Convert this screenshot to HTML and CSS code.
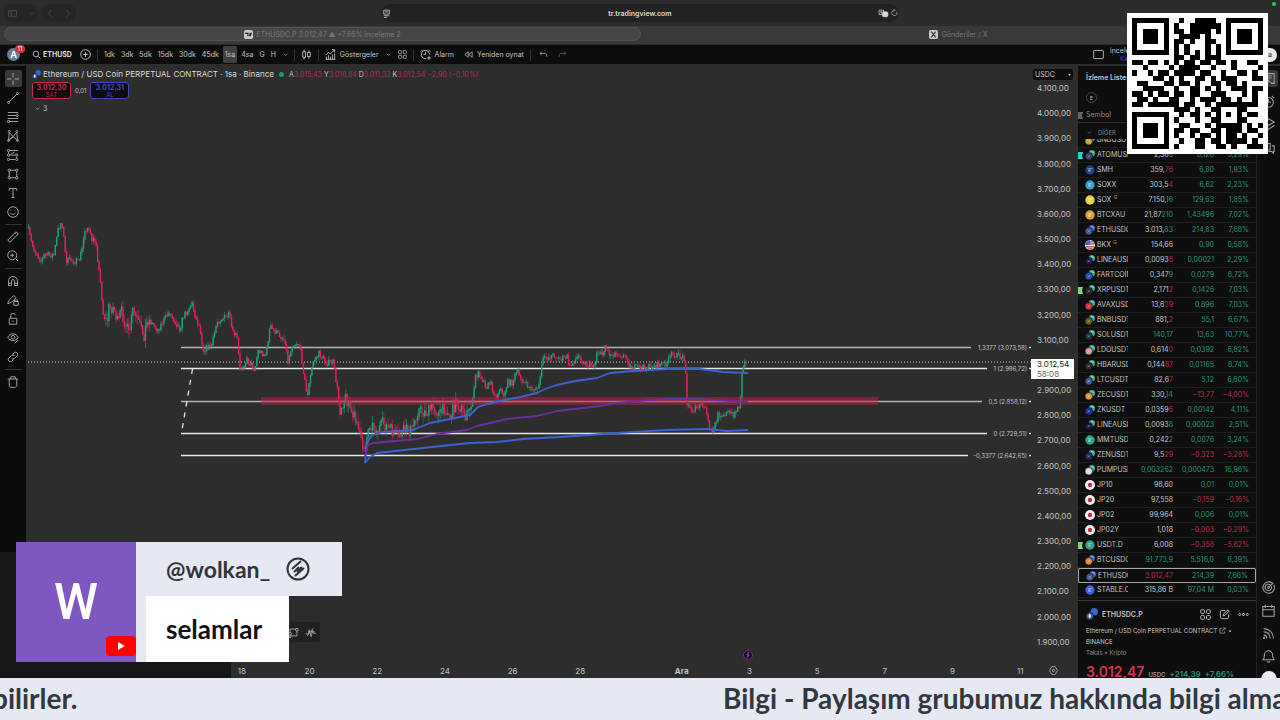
FILE: index.html
```html
<!DOCTYPE html>
<html lang="tr">
<head>
    <meta charset="UTF-8">
    <meta name="viewport" content="width=device-width, initial-scale=1.0">
    <title>ETHUSDC.P 3.012,47 - inceleme 2</title>
    <link rel="stylesheet" href="styles.css">
</head>
<body>
    <svg class="sprite" aria-hidden="true">
        <symbol id="down" viewBox="0 0 16 16"><path d="M4 6l4 4 4-4"/></symbol>
        <symbol id="search" viewBox="0 0 16 16"><circle cx="7" cy="7" r="5"/><path d="M11 11l4 4"/></symbol>
        <symbol id="plus" viewBox="0 0 16 16"><circle cx="8" cy="8" r="7"/><path d="M8 4.5v7M4.500 8h7"/></symbol>
        <symbol id="candles" viewBox="0 0 16 16"><path d="M2.5 4h4v8h-4zM4.5 1v3M4.5 12v3M9.5 5h4v6h-4zM11.5 2v3M11.5 11v3"/></symbol>
        <symbol id="indicator" viewBox="0 0 16 16"><path d="M1 9l4-4 3 2 6-6M10 1h4v4M2 15v-4M5 15V9M8 15v-4M11 15V8M14 15V7M1 15h14"/></symbol>
        <symbol id="grid" viewBox="0 0 16 16"><rect x="1" y="1" width="5.5" height="5.5" rx="1.5"/><rect x="9.5" y="1" width="5.5" height="5.5" rx="1.5"/><rect x="1" y="9.5" width="5.5" height="5.5" rx="1.5"/><rect x="9.5" y="9.5" width="5.5" height="5.5" rx="1.5"/></symbol>
        <symbol id="alarm" viewBox="0 0 16 16"><path d="M9 14H7a6 6 0 1 1 7-6M8 4v4H5M1 4l3-3M12 1l3 3M13 10v6M10 13h6"/></symbol>
        <symbol id="rewind" viewBox="0 0 16 16"><path d="M7.5 3v10L1.5 8zM14.5 3v10l-6-5z"/></symbol>
        <symbol id="undo" viewBox="0 0 16 16"><path d="M5 3L2 6l3 3M2 6h8c3 0 4 2 4 6"/></symbol>
        <symbol id="redo" viewBox="0 0 16 16"><path d="M11 3l3 3-3 3M14 6H6c-3 0-4 2-4 6"/></symbol>
        <symbol id="cross" viewBox="0 0 16 16"><path d="M8 0v6M8 10v6M0 8h6M10 8h6"/></symbol>
        <symbol id="trend" viewBox="0 0 16 16"><path d="M3 13L13 3"/><circle cx="2" cy="14" r="1.3"/><circle cx="14" cy="2" r="1.3"/></symbol>
        <symbol id="fib" viewBox="0 0 16 16"><path d="M1 2h14M1 6h11M1 10h14M3 14h12"/><circle cx="13.5" cy="6" r="1.5"/><circle cx="2" cy="14" r="1.5"/></symbol>
        <symbol id="pattern" viewBox="0 0 16 16"><path d="M2 14L3 3l5 6 5-6 1 11-6-5zM2 14l6-5"/><circle cx="3" cy="2" r="1.3"/><circle cx="13" cy="2" r="1.3"/><circle cx="2" cy="14" r="1.3"/><circle cx="14" cy="14" r="1.3"/></symbol>
        <symbol id="forecast" viewBox="0 0 16 16"><path d="M3 2h12M3 8h8M3 14h8M2 4v2M13 10v2M5 7l5-3"/><circle cx="2" cy="2" r="1.5"/><circle cx="2" cy="8" r="1.5"/><circle cx="2" cy="14" r="1.5"/><circle cx="13" cy="8" r="1.5"/><circle cx="13" cy="14" r="1.5"/></symbol>
        <symbol id="rect" viewBox="0 0 16 16"><path d="M4 3h8M4 13h8M3 4v8M13 4v8"/><circle cx="3" cy="3" r="1.5"/><circle cx="13" cy="3" r="1.5"/><circle cx="3" cy="13" r="1.5"/><circle cx="13" cy="13" r="1.5"/></symbol>
        <symbol id="text" viewBox="0 0 16 16"><path d="M3 5V2h10v3M8 2v12M6 14h4"/></symbol>
        <symbol id="smile" viewBox="0 0 16 16"><circle cx="8" cy="8" r="7"/><path d="M5 9c1 3 5 3 6 0M5.5 5v1M10.5 5v1"/></symbol>
        <symbol id="ruler" viewBox="0 0 16 16"><path d="M1 12L12 1l3 3L4 15zM5 9l1 1M8 6l1 1M11 3l1 1"/></symbol>
        <symbol id="zoom" viewBox="0 0 16 16"><circle cx="7" cy="7" r="6"/><path d="M11.5 11.5L15 15M7 4.5v5M4.5 7h5"/></symbol>
        <symbol id="magnet" viewBox="0 0 16 16"><path d="M2 14V8a6 6 0 0 1 12 0v6h-4V8a2 2 0 0 0-4 0v6zM2 11h4M10 11h4"/></symbol>
        <symbol id="lockpen" viewBox="0 0 16 16"><path d="M1 13l1-4 7-7 3 3-6 6zM9 10h6v5H9zM10 10V8h4v2"/></symbol>
        <symbol id="lock" viewBox="0 0 16 16"><path d="M3 7h10v8H3zM5 7V4a3 3 0 0 1 6-1M8 10v2"/></symbol>
        <symbol id="eye" viewBox="0 0 16 16"><path d="M1 7c3-6 11-6 14 0-3 6-11 6-14 0zM10 15l5-4"/><circle cx="8" cy="7" r="2.5"/></symbol>
        <symbol id="link" viewBox="0 0 16 16"><path d="M7 5l3-3a3 3 0 0 1 4 4l-4 4a3 3 0 0 1-4 0M9 11l-3 3a3 3 0 0 1-4-4l4-4a3 3 0 0 1 4 0"/></symbol>
        <symbol id="trash" viewBox="0 0 16 16"><path d="M1 4h14M5 4V1h6v3M3 4v9c0 1 1 2 2 2h6c1 0 2-1 2-2V4"/></symbol>
        <symbol id="list" viewBox="0 0 16 16"><path d="M1 2h14v12h-3l-2-2H1zM4 5h8M4 7.5h8M4 10h5"/></symbol>
        <symbol id="clock" viewBox="0 0 16 16"><circle cx="8" cy="9" r="6"/><path d="M8 5v4h3M1 4l3-3M12 1l3 3"/></symbol>
        <symbol id="layers" viewBox="0 0 16 16"><path d="M8 1l7 4-7 4-7-4zM1 9l7 5 7-5"/></symbol>
        <symbol id="chat" viewBox="0 0 16 16"><path d="M1 11V3h9v8H5l-2 3v-3zM12 6h3v7h-1v2l-2-2H8"/></symbol>
        <symbol id="target" viewBox="0 0 16 16"><path d="M13 3a7 7 0 1 0 1.5 2M10.5 5a4 4 0 1 0 1 1.5M8 8l6-6"/><circle cx="8" cy="8" r="1"/></symbol>
        <symbol id="calendar" viewBox="0 0 16 16"><path d="M1 3h14v12H1zM1 7h14M4 1v4M12 1v4"/></symbol>
        <symbol id="rss" viewBox="0 0 16 16"><path d="M2 2c7 0 12 5 12 12M2 6c5 0 8 3 8 8M2 10c3 0 4 1 4 4"/><circle cx="2.5" cy="13.5" r=".7"/></symbol>
        <symbol id="bell" viewBox="0 0 16 16"><path d="M1 12c2-2 2-3 2-6a5 5 0 0 1 10 0c0 3 0 4 2 6zM6 14c1 1 3 1 4 0"/></symbol>
        <symbol id="edit" viewBox="0 0 16 16"><path d="M9 2H4C3 2 2 3 2 4v8c0 1 1 2 2 2h8c1 0 2-1 2-2V8M6 10l1-3 6-6 2 2-6 6z"/></symbol>
        <symbol id="more" viewBox="0 0 16 16"><circle cx="2.5" cy="8" r="1.5"/><circle cx="8" cy="8" r="1.5"/><circle cx="13.5" cy="8" r="1.5"/></symbol>
        <symbol id="gear" viewBox="0 0 16 16"><path d="M5 1h6l4 7-4 7H5L1 8z"/><circle cx="8" cy="8" r="2"/></symbol>
        <symbol id="external" viewBox="0 0 16 16"><path d="M6 3H2v11h11v-4M9 2h5v5M14 2L7 9"/></symbol>
        <symbol id="reload" viewBox="0 0 16 16"><path d="M13 6a6 6 0 1 1-5-3M6 0l3 3-3 3"/></symbol>
        <symbol id="branch" viewBox="0 0 16 16"><path d="M3 8V3h9M4 13h9V6"/><circle cx="3" cy="10" r="2"/><circle cx="13" cy="4" r="2"/><circle cx="3" cy="14" r="1.5"/></symbol>
        <symbol id="spark" viewBox="0 0 16 16"><path d="M1 10h4l1-6 3 10 2-9 1 4h4M3 13l9-11M5 7h9"/></symbol>
        <symbol id="eth" viewBox="0 0 16 16"><circle class="coin-quote" cx="11" cy="5" r="5"/><circle class="coin-base" cx="5" cy="11" r="5"/><path class="coin-mark" d="M5 7l2 4-2 3-2-3z"/></symbol>
    </svg>

    <!-- Browser -->
    <header class="browser">
        <div class="address-row">
            <div class="side-buttons">
                <button class="pill" aria-label="Kenar çubuğu"><svg class="icon" viewBox="0 0 16 16"><path d="M1 3h14v10H1zM6 3v10M3 5h1M3 7h1"/></svg><svg class="icon small"><use href="#down"/></svg></button>
                <div class="pill">
                    <button aria-label="Geri"><svg class="icon" viewBox="0 0 16 16"><path d="M10 2L4 8l6 6"/></svg></button>
                    <button aria-label="İleri"><svg class="icon" viewBox="0 0 16 16"><path d="M6 2l6 6-6 6"/></svg></button>
                </div>
            </div>
            <div class="address">
                <svg class="icon" viewBox="0 0 16 16"><path d="M3 2h10v7H3zM3 12h10M3 15h6M5 5h6"/></svg>
                <span>tr.tradingview.com</span>
                <span class="address-tools">
                    <svg class="icon wide" viewBox="0 0 20 16"><path d="M2 2h8v8H2zM4 5h4M6 4v4"/><rect class="solid" x="8" y="5" width="10" height="9" rx="3"/></svg>
                    <svg class="icon small"><use href="#reload"/></svg>
                </span>
            </div>
            <span class="camera"></span>
        </div>
        <nav class="tabs">
            <a class="tab active" href="#"><svg class="favicon" viewBox="0 0 16 16"><rect width="16" height="16" rx="3"/><path d="M2 5h6v6H6V7H2zM10 5h4l-2 6h-3z"/></svg>ETHUSDC.P 3.012,47 ▲ +7.66% inceleme 2</a>
            <a class="tab" href="#"><svg class="favicon" viewBox="0 0 16 16"><rect width="16" height="16" rx="3"/><path class="x" d="M4 3l8 10M12 3L4 13"/></svg>Gönderiler / X</a>
        </nav>
    </header>

    <!-- Chart toolbar -->
    <div class="toolbar">
        <div class="account">A<span class="badge">11</span></div>
        <button class="symbol"><svg class="icon"><use href="#search"/></svg>ETHUSD</button>
        <button aria-label="Sembol ekle"><svg class="icon big"><use href="#plus"/></svg></button>
        <span class="divider"></span>
        <div class="intervals">
            <button>1dk</button><button>3dk</button><button>5dk</button><button>15dk</button><button>30dk</button><button>45dk</button><button class="selected">1sa</button><button>4sa</button><button>G</button><button>H</button>
            <button aria-label="Aralıklar"><svg class="icon small"><use href="#down"/></svg></button>
        </div>
        <span class="divider"></span>
        <button aria-label="Mumlar"><svg class="icon big"><use href="#candles"/></svg></button>
        <span class="divider"></span>
        <button><svg class="icon big"><use href="#indicator"/></svg>Göstergeler</button>
        <button aria-label="Şablonlar"><svg class="icon small"><use href="#down"/></svg></button>
        <button aria-label="Düzen"><svg class="icon"><use href="#grid"/></svg></button>
        <span class="divider"></span>
        <button><svg class="icon big"><use href="#alarm"/></svg>Alarm</button>
        <button class="replay"><svg class="icon"><use href="#rewind"/></svg>Yeniden oynat</button>
        <span class="divider"></span>
        <div class="history">
            <button aria-label="Geri al"><svg class="icon"><use href="#undo"/></svg></button>
            <button class="dim" aria-label="Yinele"><svg class="icon"><use href="#redo"/></svg></button>
        </div>
        <div class="toolbar-end">
            <button aria-label="Yerleşim"><svg class="icon big" viewBox="0 0 16 16"><rect x="1" y="2" width="14" height="12" rx="1"/></svg></button>
            <div class="layout-name">inceleme 2<a href="#">Kaydet</a></div>
            <button class="publish">Yayınla</button>
        </div>
    </div>

    <main class="workspace">
        <!-- Drawing tools -->
        <aside class="tools" id="tools"></aside>

        <!-- Chart -->
        <section class="chart">
            <div class="plot">
                <svg class="drawing" viewBox="26 64 1005 599" preserveAspectRatio="none">
                    <g class="levels">
                        <path class="soft" d="M181 347.5H971M181 401.5H982"/>
                        <path d="M181 368.5H987M181 433.5H987M181 455.5H968"/>
                        <path d="M1029 347.5h2M1029 368.5h2M1029 401.5h2M1029 433.5h2M1029 455.5h2"/>
                        <path class="dashed" d="M192.5 369L182 430"/>
                    </g>
                    <path class="last-price" d="M28 362H1031"/>
                    <g id="candles-layer"></g>
                    <rect class="zone" x="261" y="397" width="617" height="8"/>
                    <g class="averages">
                        <path class="upper" d="M365 463L367 443L372 435L383 432L413 430L430 423L450 419L470 415L478 407L487 404L500 401L520 397L537 393L545 389L557 385L575 381L597 378L610 373L633 371L667 369L700 369L723 372L748 373"/>
                        <path class="middle" d="M365 457L368 445L373 443L417 439L437 434L467 430L477 426L507 419L537 416L557 411L600 406L617 403L650 400L670 399L697 399L748 402"/>
                        <path class="lower" d="M365 463L370 457L377 453L423 448L450 445L470 443L497 442L523 439L560 437L617 433L667 430L707 429L727 431L748 430"/>
                    </g>
                    <g class="level-labels">
                        <text x="1027" y="350">1,3377 (3.073,58)</text>
                        <text x="1027" y="371">1 (2.986,72)</text>
                        <text x="1027" y="404">0,5 (2.858,12)</text>
                        <text x="1027" y="436">0 (2.729,51)</text>
                        <text x="1027" y="458">-0,3377 (2.642,65)</text>
                    </g>
                    <circle class="event" cx="748" cy="655" r="4.500"/>
                    <path class="event-mark" d="M749 652l-2 3h2l-2 3"/>
                </svg>
                <div class="legend">
                    <div class="legend-title">
                        <svg class="coin eth"><use href="#eth"/></svg>
                        <h1>Ethereum / USD Coin PERPETUAL CONTRACT · 1sa · Binance</h1>
                        <span class="status"></span>
                        <p class="ohlc">A<b>3.015,43</b> Y<b>3.018,84</b> D<b>3.011,33</b> K<b>3.012,54</b> <b>−2,90 (−0,10%)</b></p>
                    </div>
                    <div class="trade">
                        <button class="sell"><b>3.012,30</b>SAT</button>
                        <span>0,01</span>
                        <button class="buy"><b>3.012,31</b>AL</button>
                    </div>
                    <button class="collapse"><svg class="icon small"><use href="#down"/></svg>3</button>
                </div>
                <div class="float-tools">
                    <svg class="icon big"><use href="#branch"/></svg>
                    <svg class="icon big"><use href="#spark"/></svg>
                </div>
            </div>
            <div class="price-axis">
                <label class="currency"><select aria-label="Para birimi"><option>USDC</option></select><svg viewBox="0 0 4 3"><path d="M0 0h4L2 3z"/></svg></label>
                <ol id="prices"></ol>
            </div>
            <div class="time-axis">
                <span>18</span><span>20</span><span>22</span><span>24</span><span>26</span><span>28</span><i></i><span class="month">Ara</span><span>3</span><span>5</span><span>7</span><span>9</span><span>11</span>
                <svg class="icon"><use href="#gear"/></svg>
            </div>
        </section>

        <!-- Watchlist -->
        <aside class="watchlist">
            <div class="watch-head">
                <h2>İzleme Listesi</h2>
                <button class="round" aria-label="E">E</button>
                <div class="columns"><svg class="flag" viewBox="0 0 5 7"><path d="M0 0h5l-1 3.5 1 3.5H0z"/></svg>Sembol</div>
            </div>
            <div class="group"><svg class="icon small"><use href="#down"/></svg>DİĞER</div>
            <div class="rows">
                <table><tbody id="watch-rows"></tbody></table>
            </div>
            <div class="detail">
                <div class="detail-title">
                    <svg class="coin eth"><use href="#eth"/></svg>
                    <h3>ETHUSDC.P</h3>
                    <button aria-label="Izgara"><svg class="icon big"><use href="#grid"/></svg></button>
                    <button aria-label="Düzenle"><svg class="icon big"><use href="#edit"/></svg></button>
                    <button aria-label="Diğer"><svg class="icon big"><use href="#more"/></svg></button>
                </div>
                <p class="full-name">Ethereum / USD Coin PERPETUAL CONTRACT <svg class="icon small"><use href="#external"/></svg> •</p>
                <p>BINANCE</p>
                <p class="kind">Takas • Kripto</p>
                <div class="quote"><strong>3.012,47</strong><small>USDC</small><span>+214,39</span><span>+7,66%</span></div>
            </div>
        </aside>

        <!-- Right rail -->
        <nav class="rail">
            <button class="on" aria-label="Liste"><svg class="icon"><use href="#list"/></svg></button>
            <button aria-label="Alarmlar"><svg class="icon"><use href="#clock"/></svg></button>
            <button aria-label="Nesneler"><svg class="icon"><use href="#layers"/></svg></button>
            <button aria-label="Sohbet"><svg class="icon"><use href="#chat"/></svg></button>
            <button class="push" aria-label="Tarayıcı"><svg class="icon"><use href="#target"/></svg></button>
            <button aria-label="Takvim"><svg class="icon"><use href="#calendar"/></svg></button>
            <button aria-label="Haberler"><svg class="icon"><use href="#rss"/></svg></button>
            <button aria-label="Bildirimler"><svg class="icon"><use href="#bell"/></svg></button>
            <button class="help" aria-label="Yardım"><svg class="icon"><use href="#more"/></svg></button>
        </nav>

        <!-- Stream overlays -->
        <div class="backdrop"></div>
        <article class="message">
            <div class="avatar">W
                <svg class="youtube" viewBox="0 0 30 20"><rect width="30" height="20" rx="4"/><path d="M12 6l7 4-7 4z"/></svg>
            </div>
            <div class="bubble">
                <div class="author">@wolkan_
                    <svg viewBox="0 0 24 24"><circle cx="12" cy="12" r="10.5"/><path d="M6 12l9-8M9 19l9-8M8 15l5-5M11 15l5-5"/></svg>
                </div>
                <p>selamlar</p>
            </div>
        </article>
    </main>

    <svg class="qr" id="qr" viewBox="0 0 27 27" role="img" aria-label="QR"></svg>

    <footer class="ticker">
        <span>bilirler.</span>
        <span>Bilgi - Paylaşım grubumuz hakkında bilgi almak</span>
    </footer>

    <script src="app.js"></script>
</body>
</html>
```
FILE: styles.css
```css
* {
    margin: 0;
    padding: 0;
    box-sizing: border-box;
}
body {
    display: flex;
    flex-direction: column;
    height: 100vh;
    overflow: hidden;
    position: relative;
    background: #2d2d2d;
    color: #c4c4c4;
    font-family: Inter, "Noto Sans", sans-serif;
    font-size: 7px;
}
button {
    display: flex;
    align-items: center;
    justify-content: center;
    gap: 4px;
    border: none;
    background: none;
    color: inherit;
    font: inherit;
    white-space: nowrap;
    cursor: pointer;
}
a {
    color: inherit;
    text-decoration: none;
}
.sprite {
    position: absolute;
    width: 0;
    height: 0;
}
.icon {
    width: 9px;
    height: 9px;
    flex: none;
    fill: none;
    stroke: currentColor;
    stroke-width: 1.3;
}
.icon.small {
    width: 7px;
    height: 7px;
}
.icon.big {
    width: 11px;
    height: 11px;
}
.icon.wide {
    width: 11px;
}
.solid {
    fill: currentColor;
}

/* Browser */
.browser {
    flex: none;
    height: 45px;
    background: #2c2c2c;
}
.address-row {
    display: grid;
    grid-template-columns: 1fr 518px 1fr;
    align-items: center;
    height: 26px;
    padding: 0 4px;
}
.side-buttons {
    display: flex;
    gap: 4px;
    color: #555;
}
.pill {
    display: flex;
    align-items: center;
    justify-content: space-around;
    width: 34px;
    height: 18px;
    border-radius: 9px;
    background: #262626;
}
.address {
    display: grid;
    grid-template-columns: 1fr auto 1fr;
    align-items: center;
    height: 18px;
    padding: 0 1px;
    border-radius: 9px;
    background: #222;
    color: #d8d8d8;
    font-weight: 600;
}
.address-tools {
    display: flex;
    justify-content: flex-end;
    gap: 2px;
}
.camera {
    align-self: start;
    justify-self: end;
    width: 4px;
    height: 4px;
    margin-top: 2px;
    border-radius: 50%;
    background: #35c94a;
}
.tabs {
    display: flex;
    height: 18px;
    padding: 1px 4px 3px;
    background: #393939;
}
.tab {
    flex: 1;
    display: flex;
    align-items: center;
    justify-content: center;
    gap: 3px;
    border-radius: 7px;
    color: #777;
}
.tab.active {
    background: #464646;
    border: 1px solid #525252;
}
.favicon {
    width: 9px;
    height: 9px;
    fill: #c8c8c8;
}
.favicon path {
    fill: #222;
}
.favicon .x {
    stroke: #333;
    stroke-width: 2;
}

/* Toolbar */
.toolbar {
    flex: none;
    display: flex;
    align-items: center;
    gap: 6px;
    height: 19px;
    padding-left: 7px;
    background: #0d0d0d;
}
.toolbar button {
    height: 17px;
}
.account {
    position: relative;
    width: 13px;
    height: 13px;
    margin-right: 6px;
    border-radius: 50%;
    background: #60819b;
    color: #fff;
    font-size: 9px;
    font-weight: bold;
    line-height: 13px;
    text-align: center;
}
.badge {
    position: absolute;
    top: -3px;
    right: -5px;
    width: 10px;
    height: 8px;
    border-radius: 4px;
    background: #dd2440;
    font-size: 6px;
    font-weight: normal;
    line-height: 8px;
}
.toolbar .symbol {
    gap: 2px;
    margin-right: 2px;
    color: #ddd;
    font-weight: bold;
}
.divider {
    width: 1px;
    height: 12px;
    background: #303030;
}
.intervals {
    display: flex;
    gap: 2px;
    margin: 0 -3px 0 -2px;
}
.intervals button {
    padding: 0 2px;
}
.intervals .selected {
    border-radius: 2px;
    background: #404040;
}
.replay {
    margin-left: 4px;
}
.history {
    display: flex;
    gap: 10px;
    margin-left: 2px;
}
.dim {
    opacity: .5;
}
.toolbar-end {
    display: flex;
    align-items: center;
    gap: 6px;
    width: 187px;
    margin-left: auto;
}
.layout-name {
    flex: 1;
    line-height: 8px;
}
.layout-name a {
    display: block;
    padding-left: 10px;
    color: #3c3cd0;
    font-size: 6px;
}
.toolbar .publish {
    width: 40px;
    height: 14px;
    margin-right: 3px;
    border-radius: 7px;
    background: #eee;
    color: #222;
    justify-content: flex-end;
    padding-right: 5px;
}

/* Workspace */
.workspace {
    flex: 1;
    display: grid;
    grid-template-columns: 26px 1fr 180px 23px;
    min-height: 0;
    position: relative;
}
.tools {
    display: flex;
    flex-direction: column;
    align-items: center;
    margin-top: 2px;
    padding-top: 3px;
    background: #0c0c0c;
    color: #a2a2a2;
}
.tools button {
    width: 17px;
    height: 19px;
    border-radius: 2px;
}
.tools .icon {
    width: 12px;
    height: 12px;
}
.tools .on {
    height: 17px;
    margin: 1px 0;
    background: #3a3a3a;
}
.tools hr {
    width: 17px;
    margin: 3px 0 2px;
    border: none;
    border-top: 1px solid #333;
}

/* Chart */
.chart {
    display: grid;
    grid-template: 1fr 15px / 1fr 46px;
    min-width: 0;
    min-height: 0;
}
.plot {
    position: relative;
    min-width: 0;
    min-height: 0;
}
.drawing {
    position: absolute;
    width: 100%;
    height: 100%;
}
.levels path {
    fill: none;
    stroke: #e6e6e6;
    stroke-width: 1.3;
}
.levels .soft {
    stroke: #b4b4b4;
    stroke-width: 1.6;
}
.levels .dashed {
    stroke-dasharray: 5 6;
}
.last-price {
    stroke: #c8c8c8;
    stroke-width: 1;
    stroke-dasharray: 1 2;
}
.zone {
    fill: #c01f44;
    fill-opacity: .5;
}
.averages path {
    fill: none;
    stroke: #3d62d2;
    stroke-width: 1.8;
    stroke-linejoin: round;
}
.averages .middle {
    stroke: #6b2ea0;
}
.level-labels {
    fill: #c4c4c4;
    font-size: 6px;
    text-anchor: end;
}
.up {
    stroke: #22a07c;
}
.down {
    stroke: #dc2457;
}
.wick {
    stroke-width: .7;
    opacity: .8;
}
.body {
    stroke-width: 1.4;
}
.event {
    fill: #180b22;
    stroke: #6c2a96;
}
.event-mark {
    fill: none;
    stroke: #a44ad0;
}
.legend {
    position: absolute;
    top: 4px;
    left: 6px;
}
.legend-title {
    display: flex;
    align-items: center;
    height: 12px;
}
.legend h1 {
    margin-left: 2px;
    color: #dadada;
    font-size: 8px;
    font-weight: 400;
}
.coin {
    width: 9px;
    height: 9px;
    flex: none;
}
.coin-quote {
    fill: #3565c8;
}
.coin-base {
    fill: #46579b;
    stroke: #111;
}
.coin-mark {
    fill: #dfe4f5;
}
.status {
    width: 5px;
    height: 5px;
    margin: 0 5px;
    border-radius: 50%;
    background: #159a78;
}
.ohlc b {
    color: #ac2c4d;
    font-weight: normal;
}
.trade {
    display: flex;
    align-items: center;
    gap: 4px;
    margin-top: 2px;
    font-size: 6px;
}
.trade button {
    flex-direction: column;
    gap: 0;
    width: 39px;
    height: 17px;
    border: 1px solid;
    border-radius: 3px;
    background: #0e0b0d;
    line-height: 7px;
}
.trade b {
    font-size: 7px;
}
.trade .sell {
    color: #c52a46;
}
.trade .buy {
    color: #3c49c4;
}
.collapse {
    gap: 2px;
    margin-top: 5px;
    padding-left: 2px;
}
.float-tools {
    position: absolute;
    left: 230px;
    bottom: 21px;
    display: flex;
    justify-content: flex-end;
    align-items: center;
    gap: 6px;
    width: 64px;
    height: 20px;
    padding-right: 4px;
    border-radius: 2px;
    background: #212121;
    color: #aaa;
}
.price-axis {
    display: flex;
    flex-direction: column;
    position: relative;
    padding: 5px 3px 15px 2px;
    font-size: 8px;
}
.currency {
    position: relative;
}
.currency select {
    display: block;
    width: 40px;
    height: 11px;
    padding-left: 2px;
    border: none;
    border-radius: 2px;
    appearance: none;
    background: #0e0e0e;
    color: #c8c8c8;
    font: 7px Inter, sans-serif;
}
.currency svg {
    position: absolute;
    top: 5px;
    right: 3px;
    width: 3px;
    height: 2px;
    fill: #c8c8c8;
}
.price-axis ol {
    flex: 1;
    display: flex;
    flex-direction: column;
    justify-content: space-between;
    margin-top: 2px;
    list-style: none;
    line-height: 12px;
}
.price-axis li {
    height: 12px;
    padding-left: 4px;
}
.price-axis .current {
    margin-left: -2px;
    padding: 0;
}
.current div {
    position: relative;
    padding: 0 6px;
    background: #fff;
    color: #222;
    line-height: 10px;
}
.current small {
    display: block;
    color: #666;
    font-size: 8px;
}
.time-axis {
    grid-column: 1 / 3;
    display: grid;
    grid-template-columns: repeat(6, 2fr) 1fr repeat(6, 2fr) 0;
    align-items: center;
    padding: 0 23px 0 182px;
    font-size: 8px;
    text-align: center;
}
.time-axis .month {
    font-weight: bold;
}
.time-axis .icon {
    margin-left: -5px;
}

/* Watchlist */
.watchlist {
    display: flex;
    flex-direction: column;
    min-width: 0;
    min-height: 0;
    margin-top: 2px;
    margin-left: 1px;
    border-right: 1px solid #222;
    background: #0e0e0e;
}
.watch-head {
    flex: none;
    height: 57px;
    padding: 7px 8px 0;
    border-bottom: 1px solid #2c2c2c;
}
.watch-head h2 {
    font-size: 7px;
    font-weight: 600;
    line-height: 10px;
}
.round {
    width: 11px;
    height: 11px;
    margin: 9px 0 7px;
    border: 1px solid #444;
    border-radius: 50%;
    font-size: 5px;
}
.columns {
    display: flex;
    align-items: center;
    gap: 3px;
    margin-left: -8px;
    color: #888;
    fill: #666;
    line-height: 10px;
}
.group {
    flex: none;
    display: flex;
    align-items: center;
    gap: 5px;
    height: 16px;
    padding: 2px 8px 0;
    color: #888;
    font-size: 6px;
}
.rows {
    flex: none;
    height: 462px;
    display: flex;
    align-items: flex-end;
    overflow: hidden;
    padding-bottom: 2px;
    border-bottom: 1px solid #383838;
}
.rows table {
    width: 100%;
    table-layout: fixed;
    border-collapse: separate;
    border-spacing: 0;
}
.rows td {
    height: 15px;
    border-bottom: 1px solid #1d1d1d;
    line-height: 12px;
    text-align: right;
    white-space: nowrap;
}
.rows .name {
    width: 50px;
    text-align: left;
}
.name div {
    display: flex;
    align-items: center;
    gap: 2px;
    overflow: hidden;
}
.name .coin {
    width: 10px;
    height: 10px;
}
.flag {
    width: 5px;
    height: 7px;
    flex: none;
}
.name sup {
    margin-left: 2px;
    color: #d08028;
    font-size: 5px;
    line-height: 5px;
}
.rows .price {
    width: 45px;
}
.rows .change {
    width: 41px;
}
.rows .percent {
    padding-right: 7px;
}
.gain {
    color: #229878;
}
.loss {
    color: #bd2a4c;
}
.rows .chosen td {
    border-top: 1px solid #aaa;
    border-bottom-color: #aaa;
    line-height: 11px;
}
.rows .chosen td:first-child {
    border-left: 1px solid #aaa;
    border-radius: 2px 0 0 2px;
}
.rows .chosen td:last-child {
    border-right: 1px solid #aaa;
    border-radius: 0 2px 2px 0;
}
.detail {
    flex: 1;
    min-height: 0;
    overflow: hidden;
    padding: 7px 7px 0 8px;
}
.detail-title {
    display: flex;
    align-items: center;
    gap: 8px;
    height: 12px;
    margin-bottom: 5px;
}
.detail-title .coin {
    width: 12px;
    height: 12px;
}
.detail h3 {
    flex: 1;
    margin-left: -4px;
    font-size: 7px;
    font-weight: 600;
}
.detail p {
    font-size: 6px;
    line-height: 11px;
    white-space: nowrap;
}
.detail .full-name {
    display: flex;
    align-items: center;
    gap: 2px;
}
.detail .kind {
    color: #888;
}
.quote {
    display: flex;
    align-items: baseline;
    gap: 4px;
    margin-top: 5px;
    color: #229878;
    font-size: 8px;
    font-weight: 600;
}
.quote strong {
    color: #d83059;
    font-size: 14px;
    font-weight: 600;
}
.quote small {
    color: #999;
    font-size: 6px;
}
.rail {
    display: flex;
    flex-direction: column;
    align-items: center;
    gap: 6px;
    min-height: 0;
    margin-top: 2px;
    padding-top: 4px;
    background: #0e0e0e;
    color: #a0a0a0;
}
.rail button {
    flex: none;
    width: 18px;
    height: 17px;
    border-radius: 3px;
}
.rail .icon {
    width: 13px;
    height: 13px;
}
.rail .on {
    background: #383838;
}
.rail .push {
    margin-top: auto;
}
.rail .help {
    width: 16px;
    margin-bottom: -10px;
    border-radius: 50%;
    background: #eee;
    color: #222;
}
.help .icon {
    fill: currentColor;
}

/* Stream overlays */
.backdrop {
    position: absolute;
    left: 0;
    bottom: 0;
    width: 231px;
    height: 126px;
    background: #171717;
}
.message {
    position: absolute;
    left: 16px;
    bottom: 16px;
    display: flex;
    height: 120px;
    font-family: Lato, sans-serif;
    font-size: 26px;
    font-weight: bold;
}
.avatar {
    position: relative;
    width: 120px;
    background: #7e58c0;
    color: #fff;
    font-family: Roboto, sans-serif;
    font-size: 50px;
    font-weight: 500;
    line-height: 120px;
    text-align: center;
}
.youtube {
    position: absolute;
    right: 0;
    bottom: 6px;
    width: 30px;
    height: 20px;
    fill: #f00;
}
.youtube path {
    fill: #fff;
}
.bubble {
    display: flex;
    flex-direction: column;
    align-items: flex-start;
    background: linear-gradient(#e6e9f4, #e6e9f4) left / 10px 100% no-repeat;
}
.author {
    display: flex;
    align-items: center;
    gap: 16px;
    height: 54px;
    padding: 0 32px 0 30px;
    background: #e6e9f4;
    color: #30343b;
    font-size: 23px;
}
.author svg {
    width: 24px;
    height: 24px;
    fill: none;
    stroke: currentColor;
    stroke-width: 2;
}
.bubble p {
    flex: 1;
    margin-left: 10px;
    padding: 0 27px 0 20px;
    background: #fff;
    color: #111;
    line-height: 66px;
}
.qr {
    position: absolute;
    top: 13px;
    right: 12px;
    width: 141px;
    height: 141px;
    background: #fff;
}
.ticker {
    flex: none;
    display: flex;
    justify-content: space-between;
    height: 42px;
    overflow: hidden;
    position: relative;
    background: #e6e9f4;
    color: #33373e;
    font-family: Lato, sans-serif;
    font-size: 28px;
    font-weight: bold;
    line-height: 40px;
    white-space: nowrap;
}
.ticker span:first-child {
    margin-left: -8px;
}
.ticker span:last-child {
    width: 557px;
}
```
FILE: app.js
```javascript
const NS = "http://www.w3.org/2000/svg";

// left toolbar, "-" is a separator
const tools = ["cross", "trend", "fib", "pattern", "forecast", "rect", "text", "smile", "-", "ruler", "zoom", "-", "magnet", "lockpen", "lock", "eye", "link", "-", "trash"];
document.getElementById("tools").innerHTML = tools.map((name, i) =>
    name === "-" ? "<hr>" : `<button class="${i ? "" : "on"}" aria-label="${name}"><svg class="icon"><use href="#${name}"/></svg></button>`
).join("");

// price scale
let scale = "";
for (let p = 4100; p >= 1900; p -= 100) {
    if (p === 3000) {
        scale += '<li class="current"><div>3.012,54<small>58:08</small></div></li>';
    } else {
        scale += `<li>${Math.floor(p / 1000)}.${String(p % 1000).padStart(3, "0")},00</li>`;
    }
}
document.getElementById("prices").innerHTML = scale;

// flag, base colour, quote colour, name, price, tail, tail class, change, percent
const T = "#3aa78d";
const rows = [
    ["", "#c9a227", T, "BNBUSDT", "881,2", "", "", "55,1", "6,67%"],
    ["#21d6d0", "#3c4266", T, "ATOMUSDT", "2,38", "8", "gain", "0,120", "5,29%"],
    ["", "#1d3f7c", "", "SMH", "359,", "76", "loss", "6,80", "1,93%"],
    ["", "#2e9fd0", "", "SOXX", "303,5", "4", "loss", "6,62", "2,23%"],
    ["", "#e8cf3e", "", "SOX*", "7.150,", "16", "gain", "129,63", "1,85%"],
    ["", "#d9a02c", "", "BTCXAU", "21,87", "210", "gain", "1,43496", "7,02%"],
    ["", "#46579b", "#3565c8", "ETHUSDC", "3.013,", "83", "gain", "214,83", "7,68%"],
    ["", "us", "", "BKX*", "154,66", "", "", "0,90", "0,58%"],
    ["", "#1c1450", T, "LINEAUSDT", "0,0093", "8", "loss", "0,00021", "2,29%"],
    ["", "#2450c0", T, "FARTCOIN", "0,347", "9", "gain", "0,0279", "8,72%"],
    ["#7fd47a", "#25282b", T, "XRPUSDT", "2,171", "2", "loss", "0,1426", "7,03%"],
    ["", "#d22f45", T, "AVAXUSDT", "13,6", "39", "loss", "0,896", "7,03%"],
    ["", "#6c5a20", T, "BNBUSDT", "881,", "2", "loss", "55,1", "6,67%"],
    ["", "#22303c", T, "SOLUSDT", "", "140,17", "gain", "13,63", "10,77%"],
    ["", "#d19a9a", T, "LDOUSDT", "0,614", "0", "loss", "0,0392", "6,82%"],
    ["", "#2a2a2e", T, "HBARUSDT", "0,144", "87", "loss", "0,01165", "8,74%"],
    ["", "#3c5a94", T, "LTCUSDT", "82,6", "7", "loss", "5,12", "6,60%"],
    ["", "#d69a35", T, "ZECUSDT", "330,", "14", "gain", "−13,77", "−4,00%"],
    ["", "#1f2ea8", T, "ZKUSDT", "0,0359", "6", "loss", "0,00142", "4,11%"],
    ["", "#1c1450", T, "LINEAUSDT", "0,0093", "8", "gain", "0,00023", "2,51%"],
    ["", "#27a384", "", "MMTUSDT", "0,242", "2", "gain", "0,0076", "3,24%"],
    ["", "#1d2b60", T, "ZENUSDT", "9,5", "29", "loss", "−0,323", "−3,28%"],
    ["", "#dcdcdc", T, "PUMPUSDT", "", "0,003262", "gain", "0,000473", "16,96%"],
    ["", "jp", "", "JP10", "98,60", "", "", "0,01", "0,01%"],
    ["", "jp", "", "JP20", "97,558", "", "", "−0,159", "−0,16%"],
    ["", "jp", "", "JP02", "99,964", "", "", "0,006", "0,01%"],
    ["", "jp", "", "JP02Y", "1,018", "", "", "−0,003", "−0,29%"],
    ["#7fd47a", "#27a384", "", "USDT.D", "6,008", "", "", "−0,358", "−5,62%"],
    ["", "#e08a2c", "#3565c8", "BTCUSDC", "", "91.773,9", "gain", "5.516,0", "6,39%"],
    ["", "#46579b", "#3565c8", "ETHUSDC", "", "3.012,47", "loss", "214,39", "7,66%"],
    ["", "#3f5de0", "", "STABLE.C", "315,86 B", "", "", "97,04 M", "0,03%"]
];

function coin(base, quote) {
    if (base === "jp") {
        return '<svg class="coin" viewBox="0 0 16 16"><circle cx="8" cy="8" r="8" fill="#eee"/><circle cx="8" cy="8" r="3.5" fill="#c8284a"/></svg>';
    }
    if (base === "us") {
        return '<svg class="coin" viewBox="0 0 16 16"><circle cx="8" cy="8" r="8" fill="#e6e6ea"/><path d="M8 3h6M8 6h8M1 11h14M4 14h8" stroke="#c8384e" stroke-width="2"/><path d="M8 0v8H0a8 8 0 0 1 8-8z" fill="#3a6fc4"/></svg>';
    }
    if (!quote) {
        return `<svg class="coin" viewBox="0 0 16 16"><circle cx="8" cy="8" r="7.5" fill="${base}"/><path d="M4 6h8M8 6l-2 5M5 9l5 1" stroke="#fff" stroke-opacity=".7" fill="none"/></svg>`;
    }
    return `<svg class="coin" viewBox="0 0 16 16"><circle cx="11" cy="5" r="5" fill="${quote}"/><path d="M10 2l4 2" stroke="#fff"/><circle cx="6" cy="10" r="6" fill="${base}" stroke="#0e0e0e"/><path d="M4 8l4 4M8 8l-4 4" stroke="#fff" stroke-opacity=".45"/></svg>`;
}

document.getElementById("watch-rows").innerHTML = rows.map((r, i) => {
    const tone = r[7].startsWith("−") ? "loss" : "gain";
    const label = r[3].replace("*", "<sup>G</sup>");
    const flag = `<svg class="flag" viewBox="0 0 5 7"><path d="M0 0h5l-1 3.5 1 3.5H0z" fill="${r[0] || "none"}"/></svg>`;
    return `<tr class="${i === 29 ? "chosen" : ""}"><td class="name"><div>${flag}${coin(r[1], r[2])}<span>${label}</span></div></td>` +
        `<td class="price">${r[4]}<span class="${r[6]}">${r[5]}</span></td>` +
        `<td class="change ${tone}">${r[7]}</td><td class="percent ${tone}">${r[8]}</td></tr>`;
}).join("");

// hourly candles between the turning points
const turns = [28, 228, 32, 245, 41, 261, 45, 255, 54, 255, 58, 230, 62, 221, 64, 240, 66, 261, 70, 260, 78, 262, 82, 250, 85, 230, 88, 228, 92, 240, 96, 241, 98, 263, 101, 287, 103, 313, 107, 323, 109, 307, 114, 308, 118, 325, 121, 310, 125, 323, 129, 335, 133, 310, 139, 325, 144, 335, 148, 319, 158, 330, 169, 312, 180, 329, 183, 317, 192, 304, 197, 322, 200, 327, 203, 350, 212, 345, 217, 322, 229, 315, 233, 333, 237, 337, 240, 370, 247, 360, 255, 369, 258, 351, 266, 355, 270, 327, 277, 333, 285, 340, 288, 362, 292, 345, 299, 343, 302, 360, 307, 397, 313, 362, 319, 354, 327, 363, 333, 362, 337, 387, 340, 410, 345, 397, 349, 402, 352, 418, 357, 418, 359, 433, 363, 448, 365, 445, 370, 423, 377, 432, 383, 423, 398, 437, 405, 430, 412, 430, 418, 410, 427, 413, 433, 407, 440, 415, 445, 407, 450, 418, 456, 402, 467, 417, 473, 400, 475, 377, 479, 373, 487, 387, 490, 382, 496, 398, 500, 387, 503, 397, 508, 382, 512, 383, 517, 372, 523, 382, 530, 388, 537, 390, 541, 377, 542, 360, 554, 355, 560, 359, 567, 357, 570, 367, 578, 356, 587, 365, 595, 365, 597, 350, 602, 356, 605, 345, 610, 355, 617, 353, 627, 358, 630, 367, 643, 368, 650, 367, 667, 363, 672, 354, 685, 358, 686, 380, 687, 405, 693, 410, 702, 405, 707, 412, 709, 430, 713, 432, 718, 415, 730, 413, 733, 415, 740, 405, 742, 373, 744, 362, 747, 361];
const layer = document.getElementById("candles-layer");
let seed = 7;
function random() {
    seed = (seed * 16807) % 2147483647;
    return seed / 2147483647 - 0.5;
}
function priceAt(x) {
    let i = 0;
    while (i < turns.length - 4 && turns[i + 2] < x) i += 2;
    const t = (x - turns[i]) / (turns[i + 2] - turns[i]);
    return turns[i + 1] + (turns[i + 3] - turns[i + 1]) * t;
}
function line(x, y1, y2, name) {
    const el = document.createElementNS(NS, "path");
    el.setAttribute("d", `M${x.toFixed(1)} ${y1.toFixed(1)}V${y2.toFixed(1)}`);
    el.setAttribute("class", name);
    layer.appendChild(el);
}
let open = 228;
for (let x = 28.5; x < 747; x += 1.41) {
    const rough = x > 105 && x < 150 || x > 340 && x < 470 ? 12 : 6;
    const close = priceAt(x) + random() * rough;
    const tone = close < open ? "up" : "down";
    line(x, Math.min(open, close) - Math.abs(random()) * rough * 1.3, Math.max(open, close) + Math.abs(random()) * rough * 1.3, tone + " wick");
    line(x, open, close + (close < open ? -0.5 : 0.5), tone + " body");
    open = close;
}

// QR modules
const modules = [
    "#######..#..####..#######",
    "#.....#.#..######.#.....#",
    "#.###.#.##.####.#.#.###.#",
    "#.###.#..####.#...#.###.#",
    "#.###.#.##.#..##..#.###.#",
    "#.....#.#.#...#.#.#.....#",
    "#######.#.#.#.#.#.#######",
    "........##.##.###........",
    "##.##.#.#.##.##.##.#..##.",
    "..#....#.####..#...#....#",
    "#..#.##.####.##..#..##.#.",
    "....##.#.#..##.#.###...##",
    ".##...##.##.#..##.##.#...",
    "..####..#..##.#.#..###.##",
    "##.#.##.##.##..###...#.#.",
    ".##.#..##..#.###.##.#..#.",
    "##.######.##..#.########.",
    "........###.#..##...##...",
    "#######..#.##.#.#.#.#.##.",
    "#.....#.#...#..##...##...",
    "#.###.#..##...#.#####.#.#",
    "#.###.#.##.##..##.###.##.",
    "#.###.#.#..#.##.#.##.#..#",
    "#.....#..#..##.##.####.#.",
    "#######.#...##..##.#..###"
];
let d = "";
modules.forEach((row, y) => [...row].forEach((c, x) => {
    if (c === "#") d += `M${x + 1} ${y + 1}h1v1h-1z`;
}));
document.getElementById("qr").innerHTML = `<path d="${d}" shape-rendering="crispEdges"/>`;
```
